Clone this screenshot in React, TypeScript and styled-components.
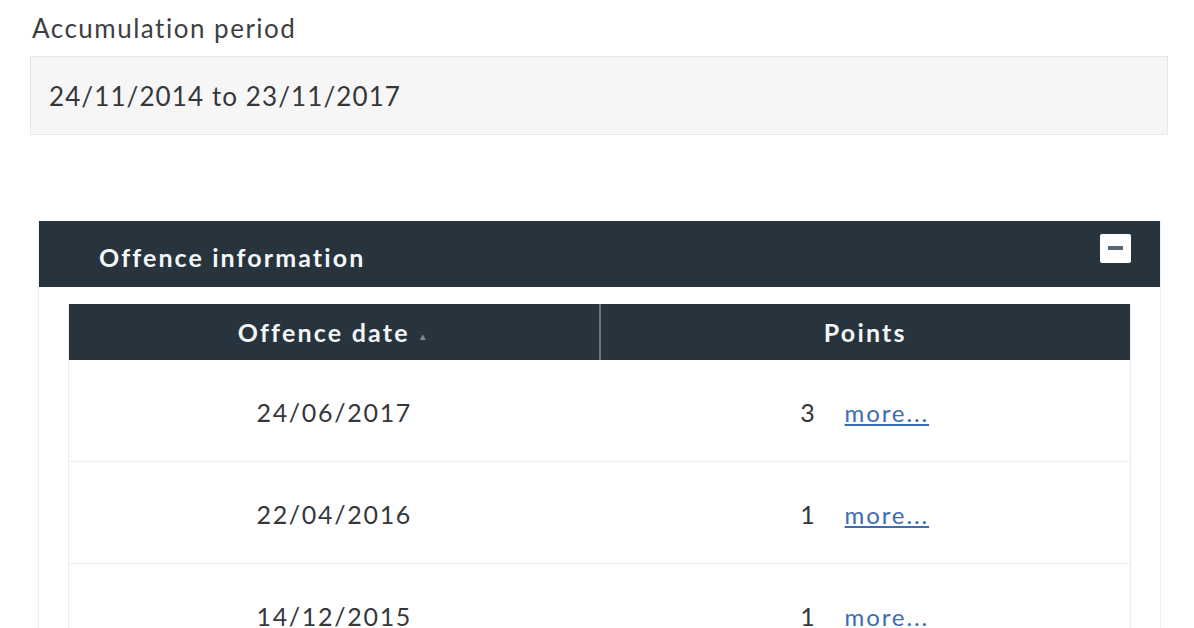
import React from "react";
import styled, { createGlobalStyle } from "styled-components";

const GlobalStyle = createGlobalStyle`
  html, body {
    margin: 0;
    padding: 0;
    background: #ffffff;
    font-family: Lato, "Open Sans", "Liberation Sans", sans-serif;
    color: #333a40;
  }
`;

const Page = styled.div`
  width: 1194px;
  height: 628px;
  overflow: hidden;
  padding: 12px 26px 0 30px;
  box-sizing: border-box;
`;

const FieldLabel = styled.div`
  font-size: 26px;
  line-height: 32px;
  letter-spacing: 1.5px;
  color: #3b3f44;
  padding-left: 2px;
  margin-bottom: 12px;
`;

const ReadonlyBox = styled.div`
  height: 79px;
  box-sizing: border-box;
  background: #f6f6f6;
  border: 1px solid #e7e7e7;
  padding: 0 18px;
  display: flex;
  align-items: center;
  font-size: 26px;
  letter-spacing: 1.1px;
  color: #33373b;
`;

const Panel = styled.section`
  margin: 86px 7px 0 8px;
  border-left: 1px solid #eeeeee;
  border-right: 1px solid #eeeeee;
`;

const PanelHeader = styled.div`
  height: 66px;
  background: #27343e;
  display: flex;
  align-items: center;
  justify-content: space-between;
  padding: 0 29px 0 60px;
`;

const PanelTitle = styled.h2`
  margin: 0;
  font-size: 25px;
  font-weight: 700;
  letter-spacing: 2.1px;
  color: #f4f6f7;
  padding-top: 6px;
`;

const CollapseButton = styled.button`
  width: 31px;
  height: 29px;
  margin-top: -12px;
  border: none;
  border-radius: 2px;
  background: #ffffff;
  display: flex;
  align-items: center;
  justify-content: center;
  padding: 0;
`;

const PanelBody = styled.div`
  padding: 17px 29px 0 29px;
`;

const Table = styled.table`
  width: 100%;
  border-collapse: collapse;
  border-left: 1px solid #ececec;
  border-right: 1px solid #ececec;
`;

const HeadCell = styled.th<{ $divider?: boolean }>`
  height: 56px;
  background: #27343e;
  color: #f2f4f5;
  font-size: 25px;
  font-weight: 700;
  letter-spacing: 2.2px;
  text-align: center;
  padding: 0;
  border-right: ${(p) => (p.$divider ? "2px solid #6b7780" : "none")};
  width: 50%;
`;

const SortArrow = styled.span`
  display: inline-block;
  margin-left: 8px;
  font-size: 10px;
  color: #7d8890;
  vertical-align: middle;
`;

const Row = styled.tr`
  border-bottom: 1px solid #eeeeee;
`;

const Cell = styled.td`
  height: 98px;
  padding: 3px 0 0 0;
  text-align: center;
  font-size: 25px;
  letter-spacing: 1.7px;
  color: #34383c;
`;

const MoreLink = styled.a`
  margin-left: 28px;
  color: #3c6db3;
  text-decoration: underline;
  font-size: 24px;
  letter-spacing: 1.9px;
`;

const offences = [
  { date: "24/06/2017", points: 3 },
  { date: "22/04/2016", points: 1 },
  { date: "14/12/2015", points: 1 },
];

export default function App() {
  return (
    <>
      <GlobalStyle />
      <Page>
        <FieldLabel>Accumulation period</FieldLabel>
        <ReadonlyBox>24/11/2014 to 23/11/2017</ReadonlyBox>

        <Panel>
          <PanelHeader>
            <PanelTitle>Offence information</PanelTitle>
            <CollapseButton aria-label="Collapse">
              <svg width="15" height="4" viewBox="0 0 15 4">
                <rect x="0" y="0" width="15" height="4" fill="#5b6670" />
              </svg>
            </CollapseButton>
          </PanelHeader>
          <PanelBody>
            <Table>
              <thead>
                <tr>
                  <HeadCell $divider>
                    Offence date<SortArrow>▲</SortArrow>
                  </HeadCell>
                  <HeadCell>Points</HeadCell>
                </tr>
              </thead>
              <tbody>
                {offences.map((o) => (
                  <Row key={o.date}>
                    <Cell>{o.date}</Cell>
                    <Cell>
                      {o.points}
                      <MoreLink href="#">more...</MoreLink>
                    </Cell>
                  </Row>
                ))}
              </tbody>
            </Table>
          </PanelBody>
        </Panel>
      </Page>
    </>
  );
}
